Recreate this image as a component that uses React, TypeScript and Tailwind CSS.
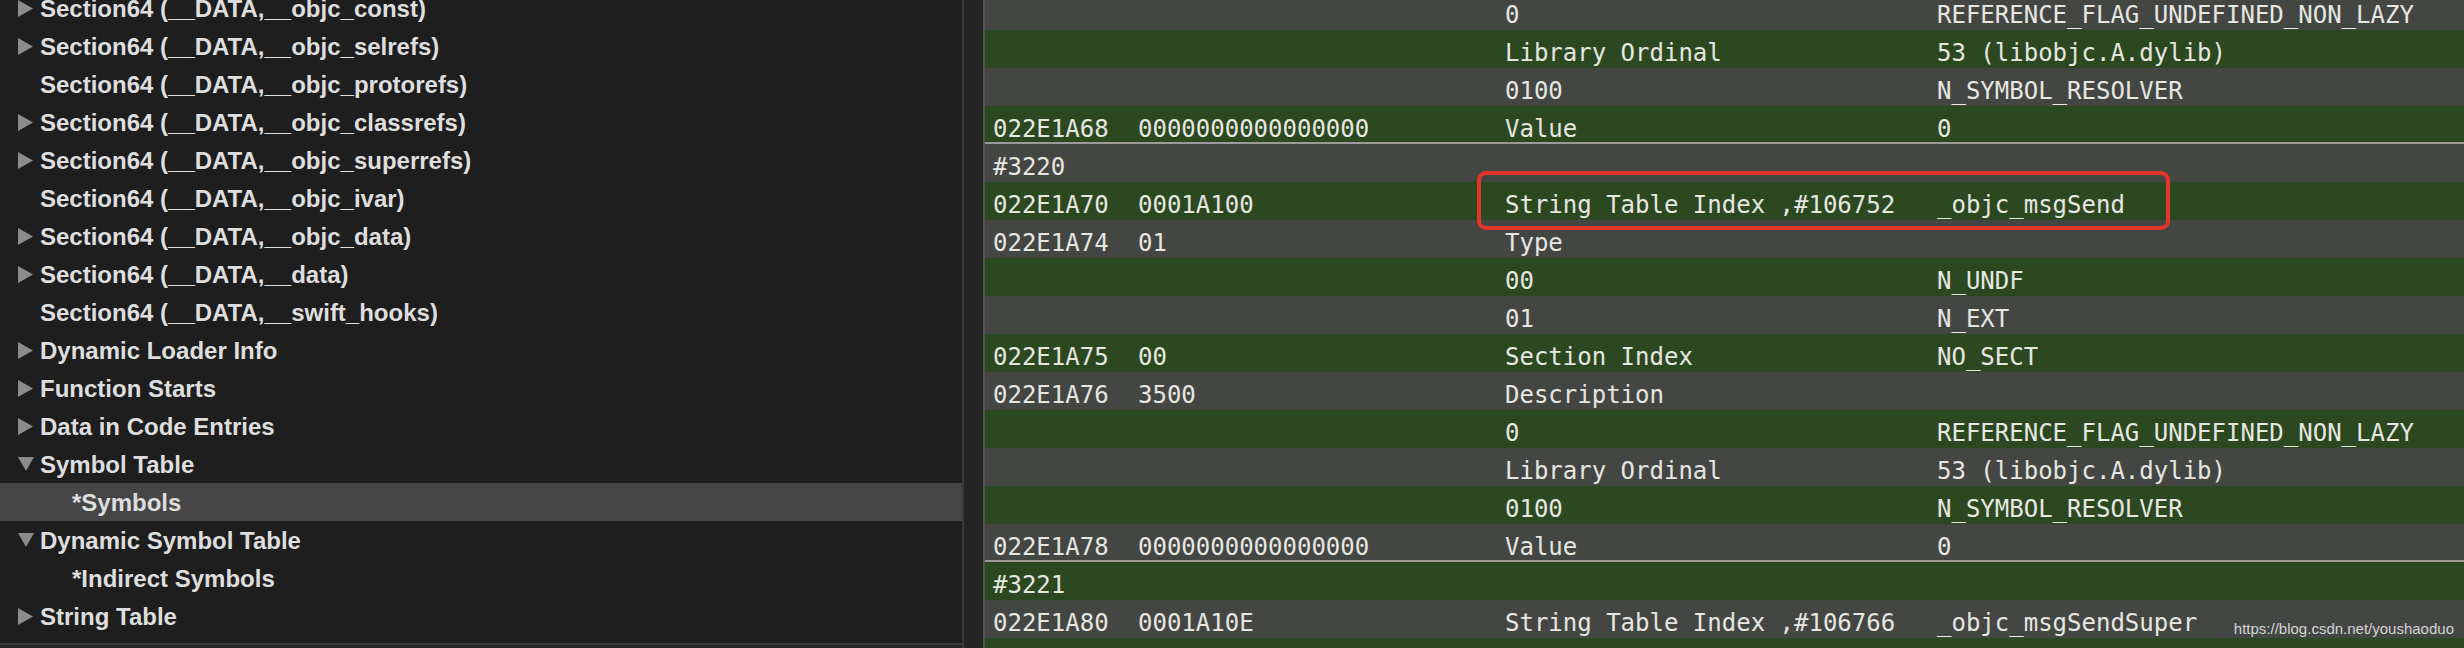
import React from "react";

type TreeItem = { label: string; arrow?: "right" | "down"; child?: boolean; selected?: boolean };

const tree: TreeItem[] = [
  { label: "Section64 (__DATA,__objc_const)", arrow: "right" },
  { label: "Section64 (__DATA,__objc_selrefs)", arrow: "right" },
  { label: "Section64 (__DATA,__objc_protorefs)" },
  { label: "Section64 (__DATA,__objc_classrefs)", arrow: "right" },
  { label: "Section64 (__DATA,__objc_superrefs)", arrow: "right" },
  { label: "Section64 (__DATA,__objc_ivar)" },
  { label: "Section64 (__DATA,__objc_data)", arrow: "right" },
  { label: "Section64 (__DATA,__data)", arrow: "right" },
  { label: "Section64 (__DATA,__swift_hooks)" },
  { label: "Dynamic Loader Info", arrow: "right" },
  { label: "Function Starts", arrow: "right" },
  { label: "Data in Code Entries", arrow: "right" },
  { label: "Symbol Table", arrow: "down" },
  { label: "*Symbols", child: true, selected: true },
  { label: "Dynamic Symbol Table", arrow: "down" },
  { label: "*Indirect Symbols", child: true },
  { label: "String Table", arrow: "right" },
];

// offset, data, description, value, separator under row, red box
type Row = [string, string, string, string, boolean?, boolean?];

const rows: Row[] = [
  ["", "", "0", "REFERENCE_FLAG_UNDEFINED_NON_LAZY"],
  ["", "", "Library Ordinal", "53 (libobjc.A.dylib)"],
  ["", "", "0100", "N_SYMBOL_RESOLVER"],
  ["022E1A68", "0000000000000000", "Value", "0", true],
  ["#3220", "", "", ""],
  ["022E1A70", "0001A100", "String Table Index ,#106752", "_objc_msgSend", false, true],
  ["022E1A74", "01", "Type", ""],
  ["", "", "00", "N_UNDF"],
  ["", "", "01", "N_EXT"],
  ["022E1A75", "00", "Section Index", "NO_SECT"],
  ["022E1A76", "3500", "Description", ""],
  ["", "", "0", "REFERENCE_FLAG_UNDEFINED_NON_LAZY"],
  ["", "", "Library Ordinal", "53 (libobjc.A.dylib)"],
  ["", "", "0100", "N_SYMBOL_RESOLVER"],
  ["022E1A78", "0000000000000000", "Value", "0", true],
  ["#3221", "", "", ""],
  ["022E1A80", "0001A10E", "String Table Index ,#106766", "_objc_msgSendSuper"],
  ["", "", "", ""],
];

const Arrow = ({ dir }: { dir: "right" | "down" }) =>
  dir === "right" ? (
    <svg width="15" height="17" viewBox="0 0 15 17">
      <polygon points="0,0 15,8.5 0,17" fill="#8c8c8c" />
    </svg>
  ) : (
    <svg width="16" height="14" viewBox="0 0 16 14">
      <polygon points="0,0 16,0 8,14" fill="#8c8c8c" />
    </svg>
  );

export default function App() {
  return (
    <div className="flex h-[648px] w-[2464px] overflow-hidden bg-[#1e1e1e]">
      {/* left outline */}
      <div className="flex w-[962px] shrink-0 flex-col overflow-hidden bg-[#1e1e1e]">
        <div className="-mt-[11px] flex flex-col">
          {tree.map((t, i) => (
            <div
              key={i}
              className={`flex h-[38px] items-center pl-[18px] font-['Liberation_Sans',Arial,sans-serif] text-[24px] font-bold text-[#dedede] ${
                t.selected ? "bg-[#464646]" : ""
              }`}
            >
              <span className="flex w-[22px] shrink-0 items-center">{t.arrow && <Arrow dir={t.arrow} />}</span>
              <span className={`pt-[2px] leading-[36px] whitespace-pre ${t.child ? "pl-[32px]" : ""}`}>{t.label}</span>
            </div>
          ))}
        </div>
        <div className="mt-auto h-[5px] shrink-0 border-t-2 border-[#3c3c3c] bg-[#262626]" />
      </div>

      {/* split divider */}
      <div className="w-[23px] shrink-0 border-x-2 border-l-[#3a3a3a] border-r-[#565656] bg-[#242424]" />

      {/* detail table */}
      <div className="relative flex min-w-0 flex-1 flex-col overflow-hidden bg-[#444644]">
        <div className="-mt-[8px] flex flex-col">
          {rows.map(([off, data, desc, val, sep, boxed], i) => (
            <div
              key={i}
              className={`relative grid h-[38px] shrink-0 grid-cols-[145px_367px_432px_1fr] pl-[8px] pt-[8px] font-['DejaVu_Sans_Mono',monospace] text-[24px] leading-[30px] text-[#e6e7e1] whitespace-pre ${
                i % 2 === 0 ? "bg-[#444644]" : "bg-[#2c4820]"
              } ${sep ? "border-b-2 border-[#9a9a9a]" : ""} ${boxed ? "z-10" : ""}`}
            >
              <span>{off}</span>
              <span>{data}</span>
              <span>{desc}</span>
              <span>{val}</span>
              {boxed && (
                <div className="pointer-events-none absolute top-[-11px] left-[492px] h-[59px] w-[693px] rounded-[9px] border-[4px] border-[#e3352b]" />
              )}
            </div>
          ))}
        </div>
        <div className="mt-auto h-[5px] shrink-0 bg-[#262626]" />
        <span className="absolute right-[10px] bottom-[12px] font-['Liberation_Sans',Arial,sans-serif] text-[15px] leading-none text-[#d4d4d4]">
          https://blog.csdn.net/youshaoduo
        </span>
      </div>
    </div>
  );
}
